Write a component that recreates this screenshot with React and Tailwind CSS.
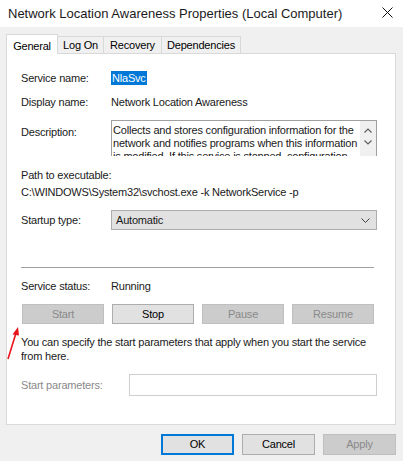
import React from "react";

const F = { fontFamily: '"Liberation Sans", Arial, sans-serif' };

function Btn({ children, w = "w-[82px]", h = "h-[20px]", disabled, primary }) {
  const base = `${w} ${h} flex items-center justify-center box-border `;
  let cls;
  if (disabled) cls = "bg-[#cccccc] border border-[#bfbfbf] text-[#8a8a8a]";
  else if (primary) cls = "bg-[#e1e1e1] border-2 border-[#0078d7] text-black";
  else cls = "bg-[#e1e1e1] border border-[#adadad] text-black";
  return <div className={base + cls}>{children}</div>;
}

export default function App() {
  return (
    <div className="relative w-[403px] h-[461px] bg-[#f0f0f0] overflow-hidden text-[11px] tracking-[-0.2px] text-black whitespace-nowrap" style={F}>
      {/* Title bar */}
      <div className="h-[27px] bg-white flex items-center justify-between pl-[8px] pr-[10px]">
        <span className="text-[13px] tracking-normal text-[#1a1a1a] leading-none">
          Network Location Awareness Properties (Local Computer)
        </span>
        <svg width="11" height="11" viewBox="0 0 11 11" className="mb-[2px]">
          <path d="M0.5 0.5 L10.5 10.5 M10.5 0.5 L0.5 10.5" stroke="#111" strokeWidth="1" />
        </svg>
      </div>

      <div className="pl-[6px] pr-[7px]">
        {/* Tabs */}
        <div className="flex items-end h-[26px] pt-[7px]">
          <div className="relative z-10 -mb-px h-[20px] w-[52px] bg-white border border-b-0 border-[#d9d9d9] flex items-start justify-center pt-[3px]">
            General
          </div>
          <div className="h-[17px] w-[46px] bg-[#f0f0f0] border border-l-0 border-b-0 border-[#d9d9d9] flex items-center justify-center pt-[1px]">
            Log On
          </div>
          <div className="h-[17px] w-[58px] bg-[#f0f0f0] border border-l-0 border-b-0 border-[#d9d9d9] flex items-center justify-center pt-[1px]">
            Recovery
          </div>
          <div className="h-[17px] w-[79px] bg-[#f0f0f0] border border-l-0 border-b-0 border-[#d9d9d9] flex items-center justify-center pt-[1px]">
            Dependencies
          </div>
        </div>

        {/* Panel */}
        <div className="h-[372px] bg-white border border-[#d9d9d9] pl-[14px] pr-[18px] text-[#1a1a1a]">
          <div className="mt-[16px] h-[16px] flex items-center">
            <div className="w-[90px]">Service name:</div>
            <span className="bg-[#0078d7] text-white px-[1px] leading-[14px]">NlaSvc</span>
          </div>
          <div className="mt-[8px] h-[16px] flex items-center">
            <div className="w-[90px]">Display name:</div>
            <span>Network Location Awareness</span>
          </div>
          <div className="mt-[10px] flex items-start">
            <div className="w-[90px] pt-[4px]">Description:</div>
            <div className="w-[266px] h-[36px] border border-b-0 border-[#a0a0a0] flex overflow-hidden">
              <div className="flex-1 pl-[1px] pt-[3px] leading-[13px] overflow-hidden whitespace-normal">
                Collects and stores configuration information for the network and notifies programs when this information is modified. If this service is stopped, configuration
              </div>
              <div className="w-[16px] bg-[#f0f0f0] flex flex-col items-center pt-[7px] gap-[7px]">
                <svg width="8" height="5" viewBox="0 0 8 5"><path d="M0.5 4.5 L4 1 L7.5 4.5" stroke="#606060" fill="none" strokeWidth="1.2" /></svg>
                <svg width="8" height="5" viewBox="0 0 8 5"><path d="M0.5 0.5 L4 4 L7.5 0.5" stroke="#606060" fill="none" strokeWidth="1.2" /></svg>
              </div>
            </div>
          </div>
          <div className="mt-[12px] h-[14px] flex items-center">Path to executable:</div>
          <div className="mt-[3px] h-[14px] flex items-center">
            C:\WINDOWS\System32\svchost.exe -k NetworkService -p
          </div>
          <div className="mt-[11px] flex items-center">
            <div className="w-[90px]">Startup type:</div>
            <div className="w-[266px] h-[20px] bg-[#e1e1e1] border border-[#adadad] flex items-center justify-between pl-[4px] pr-[6px]">
              <span>Automatic</span>
              <svg width="9" height="5" viewBox="0 0 9 5"><path d="M0.5 0.5 L4.5 4.5 L8.5 0.5" stroke="#404040" fill="none" strokeWidth="1" /></svg>
            </div>
          </div>
          <div className="mt-[37px] h-px bg-[#a0a0a0] w-[353px]" />
          <div className="mt-[11px] h-[14px] flex items-center">
            <div className="w-[90px]">Service status:</div>
            <span>Running</span>
          </div>
          <div className="mt-[11px] flex gap-[8px] pl-[1px]">
            <Btn disabled>Start</Btn>
            <Btn>Stop</Btn>
            <Btn disabled>Pause</Btn>
            <Btn disabled>Resume</Btn>
          </div>
          <div className="mt-[11px] leading-[14px] whitespace-normal">
            You can specify the start parameters that apply when you start the service from here.
          </div>
          <div className="mt-[11px] flex items-center">
            <div className="w-[108px] text-[#8a8a8a]">Start parameters:</div>
            <div className="w-[249px] h-[22px] border border-[#cfcfcf] bg-white" />
          </div>
        </div>

        {/* Bottom buttons */}
        <div className="mt-[9px] flex justify-end gap-[8px]">
          <Btn w="w-[73px]" h="h-[21px]" primary>OK</Btn>
          <Btn w="w-[73px]" h="h-[21px]">Cancel</Btn>
          <Btn w="w-[73px]" h="h-[21px]" disabled>Apply</Btn>
        </div>
      </div>

      {/* red arrow annotation */}
      <svg className="absolute left-0 top-0 pointer-events-none" width="403" height="461">
        <line x1="8" y1="359" x2="16" y2="333" stroke="#e8141c" strokeWidth="1.6" />
        <path d="M18 327 L12.5 334.5 L19 335.5 Z" fill="#e8141c" />
      </svg>
    </div>
  );
}
